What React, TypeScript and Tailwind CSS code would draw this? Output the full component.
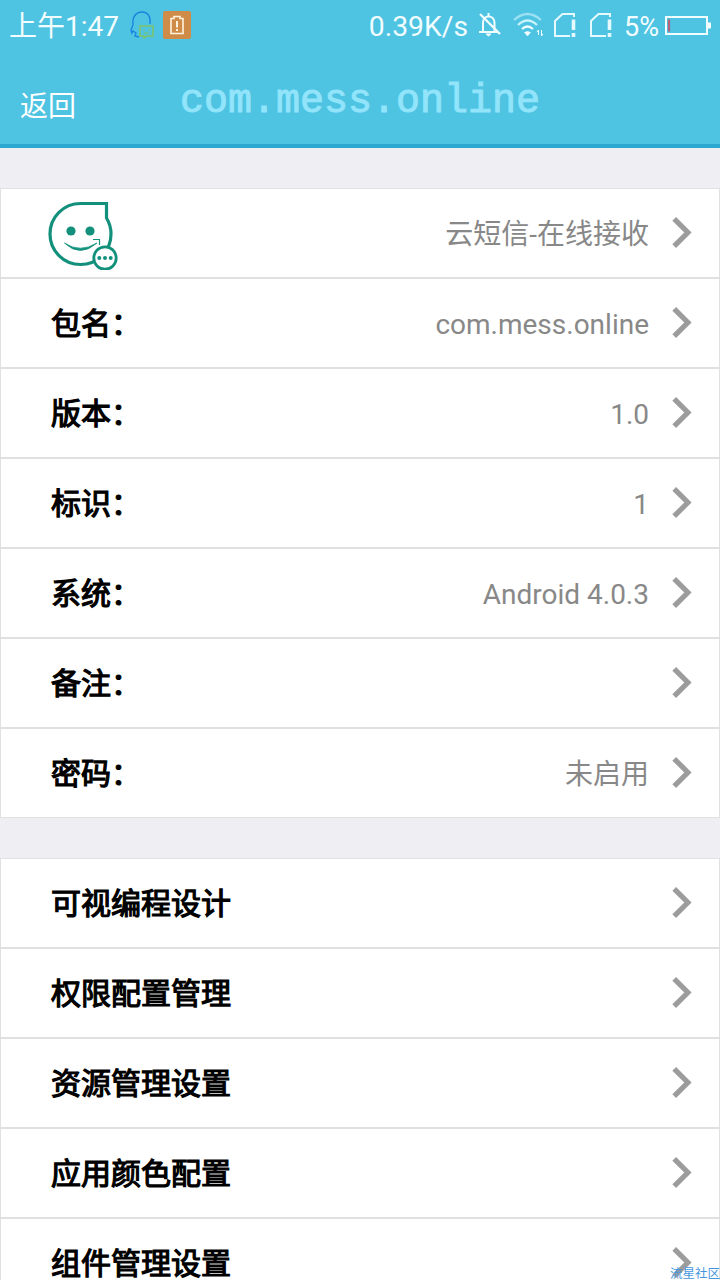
import React from "react";

const info = [
    { label: "包名：", value: "com.mess.online" },
    { label: "版本：", value: "1.0" },
    { label: "标识：", value: "1" },
    { label: "系统：", value: "Android 4.0.3" },
    { label: "备注：", value: "" },
    { label: "密码：", value: "未启用" },
]

const settings = [
    "可视编程设计",
    "权限配置管理",
    "资源管理设置",
    "应用颜色配置",
    "组件管理设置",
]

function Arrow() {
    return (
        <svg className="shrink-0" width="22" height="34" viewBox="0 0 22 34" fill="none" stroke="#9c9c9c" strokeWidth="5.2">
            <path d="M3.2 2.8L16.9 16.5L3.2 30.2" />
        </svg>
    )
}

function AppLogo() {
    return (
        <svg className="shrink-0" width="74" height="74" viewBox="0 -3 74 74" fill="none" stroke="#12907c" strokeWidth="3.2">
            <path d="M59.5 19V4.5H33.5A30.5 30.5 0 1 0 64 35C64 28 62 23 59.5 19Z" />
            <circle cx="24" cy="32" r="4.6" fill="#12907c" stroke="none" />
            <circle cx="43" cy="32" r="4.6" fill="#12907c" stroke="none" />
            <path d="M17.5 44Q33 59 50 44Q33 54.5 17.5 44Z" fill="#12907c" strokeWidth="0.8" />
            <path d="M46 40.5H52.5V46" strokeWidth="1.2" />
            <circle cx="58" cy="59" r="11.2" fill="#fff" strokeWidth="2.8" />
            <g fill="#12907c" stroke="none">
                <circle cx="52.3" cy="59" r="2" />
                <circle cx="58" cy="59" r="2" />
                <circle cx="63.7" cy="59" r="2" />
            </g>
        </svg>
    )
}

function SimIcon() {
    return (
        <svg className="shrink-0" width="24" height="26" viewBox="0 0 24 26" fill="none" stroke="#e4faff" strokeWidth="2">
            <path d="M21 5V2H9.5L2 9V24H17" />
            <path d="M20.5 7.5V18M20.5 21V25" strokeWidth="3.6" />
        </svg>
    )
}

function StatusBar() {
    return (
        <div className="flex items-center h-[50px] pl-[9px] pr-[9px] text-[28px] leading-[50px] text-[#f2fdff]">
            <p className="w-[121px] pt-1 whitespace-nowrap">上午1:47</p>
            <svg width="24" height="28" viewBox="0 0 24 28" fill="none" className="shrink-0">
                <path d="M9 26L5 25L6 22L3 20L2 22L1 19L3 14C2 6 6 1 12 1C18 1 21 6 20 13" stroke="#1684df" strokeWidth="1.3" />
                <path d="M10 15H23V25H17L14 27V25H10Z" stroke="#7cc267" strokeWidth="1.5" />
                <path d="M13 19H15M18 19H20M14 22H19" stroke="#7cc267" />
            </svg>
            <svg width="28" height="28" viewBox="0 0 28 28" fill="none" className="ml-[9px] shrink-0">
                <rect width="28" height="28" rx="2" fill="#cf8c48" />
                <path d="M8 7.5H11V5.5H17V7.5H20V22.5H8Z" stroke="#fff3df" strokeWidth="1.6" />
                <path d="M14 10V16.5M14 18V20" stroke="#fff3df" strokeWidth="2" />
            </svg>
            <p className="ml-auto pt-1 shrink-0 text-[28.3px]">0.39K/s</p>
            <svg width="24" height="26" viewBox="0 0 24 26" fill="none" stroke="#f2fdff" strokeWidth="2" className="ml-[11px] shrink-0">
                <path d="M4 20V11C4 7 6.5 4.5 9.5 4.5C13 4.5 15.5 7 15.5 11V19M0 20H19M9.5 1V4" />
                <path d="M1 2L21 22" strokeWidth="2.3" />
                <path d="M7 22H12L9.5 24Z" fill="#f2fdff" strokeWidth="1" />
            </svg>
            <svg width="31" height="26" viewBox="0 0 31 26" fill="none" stroke="#f2fdff" strokeWidth="2.2" className="ml-[10px] shrink-0">
                <path d="M1 8Q14.5 -4 28 8" stroke="#9be0f3" />
                <path d="M5 13Q14.5 4 24 13" stroke="#c9f3fd" />
                <path d="M9 17Q14.5 12 20 17" />
                <path d="M11.5 20.5Q14.5 18.5 17.5 20.5L14.5 24Z" fill="#f2fdff" strokeWidth="0.6" />
                <path d="M25.5 23V18L24 20M28.5 18V24L30 22" strokeWidth="1" />
            </svg>
            <div className="flex gap-3 ml-[9px] mr-[11px]">
                <SimIcon />
                <SimIcon />
            </div>
            <p className="w-[41px] pt-1 text-[27px] shrink-0">5%</p>
            <svg width="46" height="19" viewBox="0 0 46 19" fill="none" className="shrink-0">
                <rect x="1" y="1" width="41" height="17" stroke="#f2fdff" strokeWidth="2" />
                <path d="M44.5 6.5V12.5" stroke="#f2fdff" strokeWidth="3" />
                <path d="M4 3.5V15.5" stroke="#b5617a" strokeWidth="2.2" />
            </svg>
        </div>
    )
}

export default function AppSettingsPage() {
    return (
        <div className="relative h-[1280px] w-[720px] overflow-hidden bg-[#eeeef3] font-[Roboto,'Noto_Sans_CJK_SC',sans-serif]">
            <div className="h-[148px] border-b-4 border-[#2ba9d1] bg-[#4ec3e2]">
                <StatusBar />
                <div className="grid grid-cols-[160px_400px_160px] h-[94px]">
                    <p className="pl-5 pt-9 text-[28px] leading-[42px] text-white">返回</p>
                    <p className="pt-[27px] text-center text-[40px] leading-[50px] text-[#92e4fa] font-['Liberation_Mono',monospace] [-webkit-text-stroke:1px_#92e4fa]">com.mess.online</p>
                </div>
            </div>

            <div className="mt-10">
                <div className="flex items-center h-[90px] border border-[#e0e0e2] bg-white pl-[46px] pr-[26px]">
                    <AppLogo />
                    <p className="ml-auto mr-[22px] pt-1 text-[28px] text-[#888]">云短信-在线接收</p>
                    <Arrow />
                </div>
                {info.map((item, key) =>
                    <div key={key} className="flex items-center h-[90px] border border-[#e0e0e2] bg-white pl-[50px] pr-[26px]">
                        <p className="text-[30px] text-black [-webkit-text-stroke:1.2px_black]">{item.label}</p>
                        <p className="ml-auto mr-[22px] pt-1 text-[28px] text-[#888]">{item.value}</p>
                        <Arrow />
                    </div>
                )}
            </div>

            <div className="mt-10">
                {settings.map((name, key) =>
                    <div key={key} className="flex justify-between items-center h-[90px] border border-[#e0e0e2] bg-white pl-[50px] pr-[26px]">
                        <p className="text-[30px] text-black [-webkit-text-stroke:1.2px_black]">{name}</p>
                        <Arrow />
                    </div>
                )}
            </div>

            {/* watermark over the last row */}
            <p className="absolute right-0 bottom-0 text-[12.5px] leading-[12px] text-[#4597df] whitespace-nowrap">流星社区</p>
        </div>
    )
}
